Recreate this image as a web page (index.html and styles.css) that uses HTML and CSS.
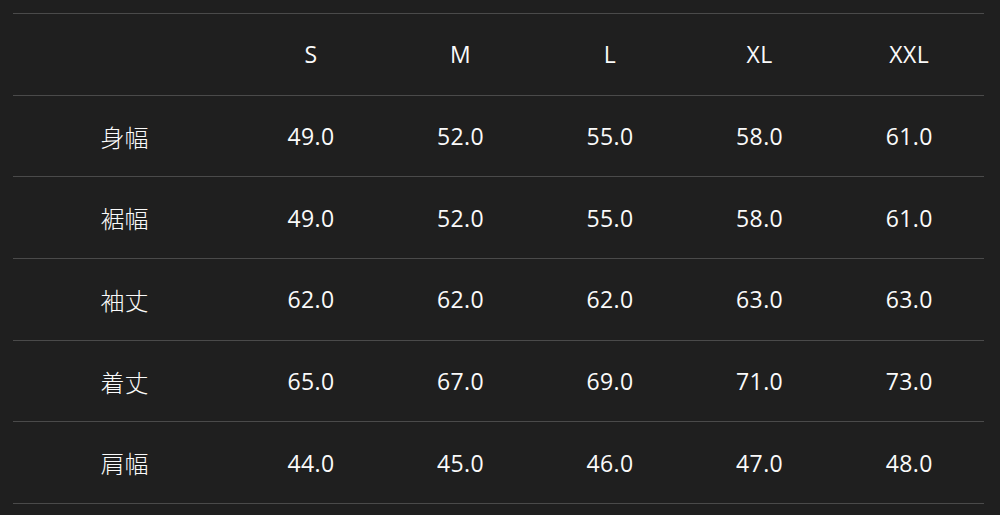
FILE: index.html
```html
<!DOCTYPE html>
<html lang="ja">
<head>
<meta charset="utf-8">
<link rel="stylesheet" href="styles.css">
</head>
<body>
<table class="size-table">
  <thead>
    <tr><th class="label"></th><th>S</th><th>M</th><th>L</th><th>XL</th><th>XXL</th></tr>
  </thead>
  <tbody>
    <tr><td class="label">身幅</td><td>49.0</td><td>52.0</td><td>55.0</td><td>58.0</td><td>61.0</td></tr>
    <tr><td class="label">裾幅</td><td>49.0</td><td>52.0</td><td>55.0</td><td>58.0</td><td>61.0</td></tr>
    <tr><td class="label">袖丈</td><td>62.0</td><td>62.0</td><td>62.0</td><td>63.0</td><td>63.0</td></tr>
    <tr><td class="label">着丈</td><td>65.0</td><td>67.0</td><td>69.0</td><td>71.0</td><td>73.0</td></tr>
    <tr><td class="label">肩幅</td><td>44.0</td><td>45.0</td><td>46.0</td><td>47.0</td><td>48.0</td></tr>
  </tbody>
</table>
</body>
</html>
```
FILE: styles.css
```css
html, body {
  margin: 0;
  padding: 0;
  background: #1f1f1f;
}
body {
  padding: 13px 16px 0 13px;
  height: 515px;
  box-sizing: border-box;
  overflow: hidden;
}
.size-table {
  width: 971px;
  border-collapse: collapse;
  color: #fafafa;
  font-family: "Open Sans", "Noto Sans CJK JP", sans-serif;
  font-size: 23px;
  letter-spacing: 0.4px;
}
.size-table th,
.size-table td {
  border-top: 1px solid #4a4a4a;
  border-bottom: 1px solid #4a4a4a;
  height: 80.7px;
  padding: 0;
  text-align: center;
  vertical-align: middle;
  font-weight: 400;
  width: 150px;
}
.size-table .label {
  width: 224px;
  font-family: "Noto Sans CJK JP", sans-serif;
  font-size: 24px;
  font-weight: 300;
  letter-spacing: 0;
}
```
